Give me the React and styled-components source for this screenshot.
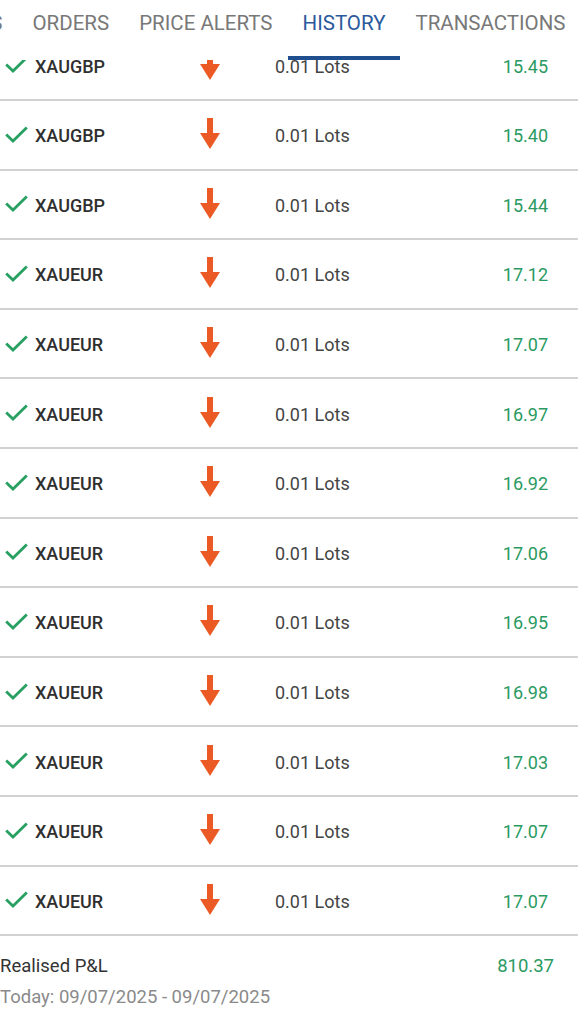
import React from 'react'
import styled, { createGlobalStyle } from 'styled-components'

const GlobalStyle = createGlobalStyle`
  html, body {
    margin: 0;
    padding: 0;
    background: #ffffff;
    font-family: Roboto, "Noto Sans", Arial, sans-serif;
  }
`

const tabs = ['POSITIONS', 'ORDERS', 'PRICE ALERTS', 'HISTORY', 'TRANSACTIONS']

const trades = [
  { symbol: 'XAUGBP', value: '15.45' },
  { symbol: 'XAUGBP', value: '15.40' },
  { symbol: 'XAUGBP', value: '15.44' },
  { symbol: 'XAUEUR', value: '17.12' },
  { symbol: 'XAUEUR', value: '17.07' },
  { symbol: 'XAUEUR', value: '16.97' },
  { symbol: 'XAUEUR', value: '16.92' },
  { symbol: 'XAUEUR', value: '17.06' },
  { symbol: 'XAUEUR', value: '16.95' },
  { symbol: 'XAUEUR', value: '16.98' },
  { symbol: 'XAUEUR', value: '17.03' },
  { symbol: 'XAUEUR', value: '17.07' },
  { symbol: 'XAUEUR', value: '17.07' },
]

function CheckIcon() {
  return (
    <svg width="23" height="17" viewBox="0 0 23 17">
      <polyline points="1.2,8.5 8,15 21.8,1.5" fill="none" stroke="#27a062" strokeWidth="2.8" />
    </svg>
  )
}

function ArrowDown() {
  return (
    <svg width="20" height="32" viewBox="0 0 20 32">
      <rect x="7" y="0" width="6" height="17" fill="#eb5a25" />
      <polygon points="0,15 20,15 10,31" fill="#eb5a25" />
    </svg>
  )
}

function App() {
  return (
    <Page>
      <GlobalStyle />

      <Header>
        <TabStrip>
          {tabs.map((t) => (
            <Tab key={t} $active={t === 'HISTORY'}>{t}</Tab>
          ))}
        </TabStrip>
      </Header>

      <Viewport>
        <List>
          {trades.map((trade, i) => (
            <Row key={i}>
              <Check><CheckIcon /></Check>
              <Symbol>{trade.symbol}</Symbol>
              <Direction><ArrowDown /></Direction>
              <Lots>0.01 Lots</Lots>
              <Profit>{trade.value}</Profit>
            </Row>
          ))}
        </List>

        <Footer>
          <FooterLine>
            <Label>Realised P&amp;L</Label>
            <Total>810.37</Total>
          </FooterLine>
          <DateRange>Today: 09/07/2025 - 09/07/2025</DateRange>
        </Footer>
      </Viewport>
    </Page>
  )
}

const Page = styled.div`
  width: 578px;
  height: 1024px;
  overflow: hidden;
  background: #ffffff;
  display: flex;
  flex-direction: column;
`

const Header = styled.div`
  position: relative;
  z-index: 2;
  height: 60px;
  flex-shrink: 0;
  overflow: hidden;
  pointer-events: none;
`

const TabStrip = styled.div`
  display: flex;
  margin-left: -115.7px;
  height: 100%;
`

const Tab = styled.div`
  flex-shrink: 0;
  box-sizing: border-box;
  height: 60px;
  padding: 12px 15px 0;
  font-size: 20.5px;
  line-height: 23px;
  white-space: nowrap;
  color: ${(p) => (p.$active ? '#2b5a9c' : '#787878')};
  border-bottom: 4px solid ${(p) => (p.$active ? '#1f4f8f' : 'transparent')};
`

const Viewport = styled.div`
  flex: 1;
  overflow: hidden;
`

const List = styled.div`
  margin-top: -28.6px;
`

const Row = styled.div`
  box-sizing: content-box;
  height: 65.6px;
  display: grid;
  grid-template-columns: 30px 165px 20px 1fr auto;
  align-items: center;
  padding: 2px 30px 0 5px;
  border-bottom: 2px solid #d2d2d2;
  font-size: 18px;
`

const Check = styled.div`
  display: flex;
  margin-top: -3px;
`

const Symbol = styled.div`
  font-weight: 500;
  color: #2f2f2f;
`

const Direction = styled.div`
  display: flex;
  margin-top: -3px;
`

const Lots = styled.div`
  padding-left: 55px;
  color: #444444;
`

const Profit = styled.div`
  color: #2a9a62;
  text-align: right;
`

const Footer = styled.div`
  padding: 14.5px 24px 0 0;
  font-size: 18.5px;
  line-height: 31px;
`

const FooterLine = styled.div`
  display: flex;
  justify-content: space-between;
`

const Label = styled.span`
  color: #333333;
`

const Total = styled.span`
  color: #2a9a62;
`

const DateRange = styled.div`
  color: #8a8a8a;
`

export default App
